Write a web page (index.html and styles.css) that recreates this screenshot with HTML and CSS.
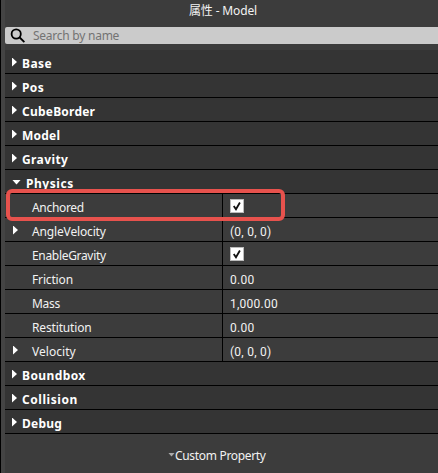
FILE: index.html
```html
<!DOCTYPE html>
<html lang="zh">
<head>
<meta charset="utf-8">
<title>属性 - Model</title>
<link rel="stylesheet" href="styles.css">
</head>
<body>
<main class="panel">
  <header class="title"><span class="cjk">属性</span> - Model</header>
  <div class="search">
    <svg class="lens" width="16" height="16" viewBox="0 0 16 16"><circle cx="6.2" cy="6" r="4.6"/><path d="M9.7 9.5L14.4 14.2"/></svg>
    <span>Search by name</span>
  </div>
  <div class="list">
    <div class="section"><i class="arrow"></i><span>Base</span></div>
    <div class="section"><i class="arrow"></i><span>Pos</span></div>
    <div class="section"><i class="arrow"></i><span class="snug">CubeBorder</span></div>
    <div class="section"><i class="arrow"></i><span class="snug">Model</span></div>
    <div class="section"><i class="arrow"></i><span>Gravity</span></div>
    <div class="section open"><i class="arrow down"></i><span class="wide">Physics</span></div>
    <div class="prop marked"><div class="key"><span class="tight">Anchored</span></div><div class="value"><svg class="check" width="14" height="14" viewBox="0 0 14 14"><path d="M3.2 7L5.8 10.8L10.4 3"/></svg></div></div>
    <div class="prop"><div class="key"><i class="arrow"></i><span>AngleVelocity</span></div><div class="value">(0, 0, 0)</div></div>
    <div class="prop"><div class="key"><span class="tight">EnableGravity</span></div><div class="value"><svg class="check" width="14" height="14" viewBox="0 0 14 14"><path d="M3.2 7L5.8 10.8L10.4 3"/></svg></div></div>
    <div class="prop"><div class="key"><span>Friction</span></div><div class="value">0.00</div></div>
    <div class="prop"><div class="key"><span class="tight">Mass</span></div><div class="value">1,000.00</div></div>
    <div class="prop"><div class="key"><span>Restitution</span></div><div class="value">0.00</div></div>
    <div class="prop"><div class="key"><i class="arrow"></i><span class="natural">Velocity</span></div><div class="value">(0, 0, 0)</div></div>
    <div class="section"><i class="arrow"></i><span>Boundbox</span></div>
    <div class="section"><i class="arrow"></i><span class="wide">Collision</span></div>
    <div class="section"><i class="arrow"></i><span class="snug">Debug</span></div>
  </div>
  <footer class="custom"><i class="caret"></i><span class="tight">Custom Property</span></footer>
</main>
</body>
</html>
```
FILE: styles.css
```css
*, *::after { box-sizing: border-box; }
body {
  margin: 0;
  background: #3c3c3c;
  color: #f2f2f2;
  font: 12px/16px "Noto Sans", "Noto Sans CJK SC", sans-serif;
}
.panel {
  height: 473px;
  overflow: hidden;
  border-left: 1px solid #000;
  box-shadow: inset 4px 0 #444;
  padding-left: 4px;
}
.title {
  height: 27px;
  padding: 3px 0 0 184px;
  white-space: nowrap;
  letter-spacing: -0.15px;
}
.cjk {
  font-family: "Noto Sans CJK SC", sans-serif;
  line-height: 14px;
}
.search {
  height: 17px;
  margin-bottom: 6px;
  display: flex;
  align-items: center;
  gap: 7px;
  padding-left: 5px;
  background: #cbcbcb;
  color: #737373;
  border-radius: 2px 0 0 2px;
  letter-spacing: -0.25px;
}
.lens {
  margin-top: 1px;
  fill: none;
  stroke: #000;
  stroke-width: 1.8;
}
.section {
  height: 24px;
  display: flex;
  align-items: center;
  padding: 4px 0 0 7px;
  gap: 5px;
  background: #343434;
  border-bottom: 1px solid #000;
  color: #fff;
  font-weight: 700;
  letter-spacing: 0.4px;
}
.section .snug { letter-spacing: 0.22px; }
.section .wide { letter-spacing: 0.55px; }
.arrow {
  width: 5px;
  height: 9px;
  flex: none;
  margin-top: -3px;
  background: #fff;
  clip-path: polygon(0 0, 100% 50%, 0 100%);
}
.arrow.down {
  width: 9px;
  height: 5px;
  clip-path: polygon(0 0, 100% 0, 50% 100%);
}
.prop {
  position: relative;
  height: 24px;
  display: flex;
  border-bottom: 1px solid #000;
}
.key {
  width: 218px;
  display: flex;
  align-items: center;
  padding: 4px 0 0 27px;
  border-right: 1px solid #000;
  letter-spacing: -0.15px;
}
.key .natural { letter-spacing: 0.05px; }
.tight { letter-spacing: -0.32px; }
.key .arrow {
  margin-left: -19px;
  margin-right: 14px;
}
.value {
  display: flex;
  align-items: center;
  padding: 4px 0 0 7px;
  font-family: Roboto, sans-serif;
  letter-spacing: 0.25px;
}
.check {
  margin-top: -3px;
  background: #fff;
  border: 1px solid #bbb;
  fill: none;
  stroke: #111;
  stroke-width: 2.1;
}
.marked::after {
  content: "";
  position: absolute;
  left: 1px;
  top: -5px;
  width: 279px;
  height: 32px;
  border: 4px solid #e7524d;
  border-radius: 6px;
  z-index: 1;
}
.custom {
  display: flex;
  align-items: center;
  padding: 14px 0 0 163px;
}
.caret {
  width: 7px;
  height: 4px;
  margin-top: -3px;
  background: #aaa;
  clip-path: polygon(0 0, 100% 0, 50% 100%);
}
```
